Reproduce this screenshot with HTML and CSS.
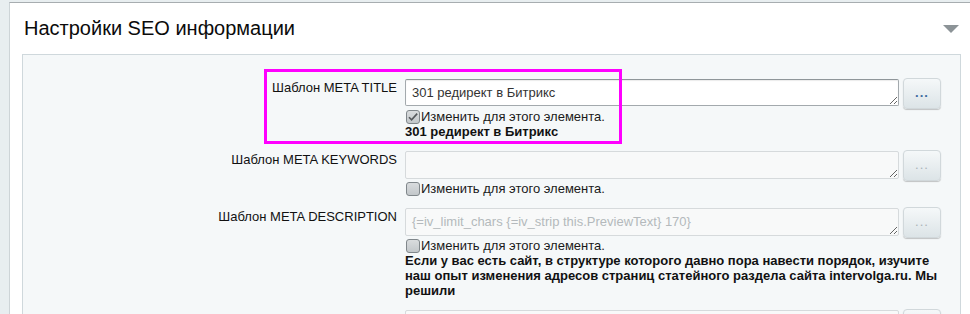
FILE: index.html
```html
<!DOCTYPE html>
<html lang="ru">
<head>
    <meta charset="UTF-8">
    <title>Настройки SEO информации</title>
    <link rel="stylesheet" href="styles.css">
</head>
<body>
    <div class="panel">
        <div class="panel-head">
            <h2 class="panel-title">Настройки SEO информации</h2>
            <span class="panel-toggle"></span>
        </div>
        <div class="seo-box">
            <div class="seo-row">
                <div class="seo-label">Шаблон META TITLE</div>
                <div class="seo-field">
                    <div class="seo-input">
                        <textarea class="seo-text">301 редирект в Битрикс</textarea>
                        <button class="seo-btn">...</button>
                    </div>
                    <label class="seo-check">
                        <span class="check-box"><svg width="12" height="12" viewBox="0 0 12 12"><path d="M2 6.2 L4.6 8.8 L10.2 2.6" fill="none" stroke="#55595c" stroke-width="1.6"/></svg></span>
                        Изменить для этого элемента.
                    </label>
                    <div class="seo-value">301 редирект в Битрикс</div>
                </div>
                <div class="seo-mark"></div>
            </div>
            <div class="seo-row">
                <div class="seo-label">Шаблон META KEYWORDS</div>
                <div class="seo-field">
                    <div class="seo-input">
                        <textarea class="seo-text is-off" readonly></textarea>
                        <button class="seo-btn is-off">...</button>
                    </div>
                    <label class="seo-check">
                        <span class="check-box"></span>
                        Изменить для этого элемента.
                    </label>
                </div>
            </div>
            <div class="seo-row">
                <div class="seo-label">Шаблон META DESCRIPTION</div>
                <div class="seo-field">
                    <div class="seo-input">
                        <textarea class="seo-text is-off" readonly>{=iv_limit_chars {=iv_strip this.PreviewText} 170}</textarea>
                        <button class="seo-btn is-off">...</button>
                    </div>
                    <label class="seo-check">
                        <span class="check-box"></span>
                        Изменить для этого элемента.
                    </label>
                    <div class="seo-value">Если у вас есть сайт, в структуре которого давно пора навести порядок, изучите наш опыт изменения адресов страниц статейного раздела сайта intervolga.ru. Мы решили</div>
                </div>
            </div>
            <div class="seo-row">
                <div class="seo-label">Заголовок элемента</div>
                <div class="seo-field">
                    <div class="seo-input">
                        <textarea class="seo-text is-off" readonly></textarea>
                        <button class="seo-btn is-off">...</button>
                    </div>
                </div>
            </div>
        </div>
    </div>
</body>
</html>
```

FILE: styles.css
```css
html, body {
    overflow: hidden;
}
body {
    margin: 0;
    padding-top: 2px;
    background: #e8eef0;
    font-family: 'Liberation Sans', Arial, sans-serif;
    font-size: 13px;
    color: #000;
}
.panel {
    margin-left: 9px;
    width: 963px;
    min-height: 320px;
    background: #fff;
    border-top: 1px solid #a7adb0;
    border-left: 1px solid #cdd4d7;
}
.panel-head {
    display: flex;
    justify-content: space-between;
    align-items: center;
    padding: 14px 14px 14px 14px;
}
.panel-title {
    margin: 0;
    font-size: 20px;
    font-weight: normal;
    line-height: 23px;
    color: #0b0b0b;
}
.panel-toggle {
    width: 0;
    height: 0;
    border-left: 8px solid transparent;
    border-right: 8px solid transparent;
    border-top: 8px solid #8c9397;
}
.seo-box {
    margin: 0 12px;
    padding-top: 18px;
    min-height: 300px;
    background: #f5f8f9;
    border: 1px solid #cfd8dc;
}
.seo-row {
    position: relative;
    display: grid;
    grid-template-columns: 374px 536px;
    column-gap: 8px;
    padding: 6px 0;
}
.seo-label {
    text-align: right;
    line-height: 15px;
    padding-top: 1px;
    color: #111;
}
.seo-input {
    display: flex;
    align-items: flex-start;
    gap: 4px;
    height: 27px;
}
.seo-text {
    box-sizing: border-box;
    width: 494px;
    height: 27px;
    margin: 0;
    padding: 5px 6px;
    font-family: 'Liberation Sans', Arial, sans-serif;
    font-size: 13px;
    line-height: 15px;
    color: #333;
    background: #fff;
    border: 1px solid #a3a9ad;
    border-top-color: #8f969a;
    border-radius: 2px;
    box-shadow: inset 0 1px 1px rgba(0, 0, 0, 0.08);
    overflow: hidden;
    outline: none;
}
.seo-text.is-off {
    height: 28px;
    color: #b4b9bc;
    background: #f8f9f9;
    border-color: #d6dadc;
    box-shadow: none;
}
.seo-btn {
    box-sizing: border-box;
    width: 38px;
    height: 31px;
    margin-top: -1px;
    padding: 0 0 3px;
    font-family: 'Liberation Sans', Arial, sans-serif;
    font-size: 13px;
    font-weight: bold;
    letter-spacing: 1px;
    color: #3f6b9f;
    background: linear-gradient(#f5f8f9, #dce4e7);
    border: 1px solid #d1d8db;
    border-radius: 4px;
    box-shadow: 0 1px 1px rgba(0, 0, 0, 0.22);
}
.seo-btn.is-off {
    color: #aab2b7;
    font-weight: normal;
}
.seo-check {
    display: flex;
    align-items: center;
    gap: 1px;
    margin-top: 3px;
    line-height: 15px;
    color: #1a1a1a;
}
.check-box {
    box-sizing: border-box;
    display: flex;
    align-items: center;
    justify-content: center;
    width: 14px;
    height: 14px;
    margin-left: 1px;
    background: linear-gradient(#d9dcde, #c2c7ca);
    border: 1px solid #80878b;
    border-radius: 3px;
}
.seo-value {
    font-weight: bold;
    line-height: 15px;
    color: #111;
}
.seo-mark {
    position: absolute;
    top: -4px;
    left: 241px;
    box-sizing: border-box;
    width: 358px;
    height: 75px;
    border: 3px solid #ff00ff;
    pointer-events: none;
}
```
